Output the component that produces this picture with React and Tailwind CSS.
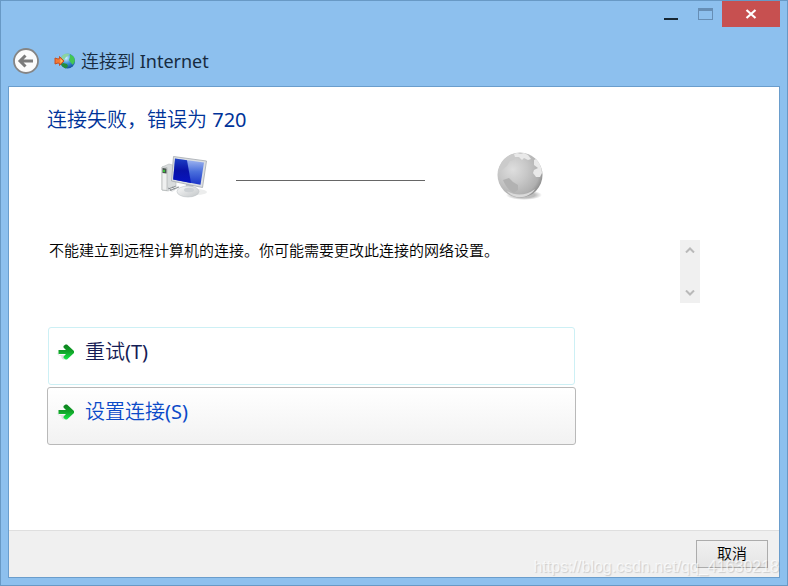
function BackIcon() {
    return (
        <svg viewBox="0 0 26 26" className="size-[26px]" aria-hidden="true">
            <circle cx="13" cy="13" r="12" fill="#fbfbfb" stroke="#858585" strokeWidth="1.8" />
            <path d="M20 13H8M12.5 7.5L7 13l5.5 5.5" fill="none" stroke="#7b7b7b" strokeWidth="3" />
        </svg>
    );
}

function InternetIcon() {
    return (
        <svg viewBox="0 0 22 18" className="h-[18px] w-[22px]" aria-hidden="true">
            <defs>
                <radialGradient id="net" cx="0.4" cy="0.3" r="0.75">
                    <stop offset="0" stopColor="#d4f3ff" />
                    <stop offset="0.5" stopColor="#3f94d8" />
                    <stop offset="1" stopColor="#104a98" />
                </radialGradient>
            </defs>
            <circle cx="13.5" cy="9" r="7.5" fill="url(#net)" />
            <path d="M8 4c2-3 6-3 8-2l-2 2-2 1-2 3-3 1c0-2 0-3 1-5z" fill="#8bd4a0" />
            <path d="M16 2l4 3 1 4-2 4-2-2-2-3 1-3z" fill="#43c653" />
            <path d="M9 11l4 1 1 2-2 2.5c-2-.5-4-2-5-4z" fill="#258e3b" />
            <path d="M1 6l3 1 1.500-.5V4.500L10 9l-4.500 4.500v-2L4 11l-3 1z" fill="#f47a35" stroke="#c4481b" strokeWidth="0.9" />
            <path d="M6.500 6.800L8.800 9l-2.300 2.200z" fill="#ffc65c" />
        </svg>
    );
}

function ComputerIcon() {
    return (
        <svg viewBox="0 0 50 46" className="h-[46px] w-[50px]" aria-hidden="true">
            <defs>
                <linearGradient id="screen" x1="0" y1="0" x2="0" y2="1">
                    <stop offset="0" stopColor="#a9bdf2" />
                    <stop offset="0.5" stopColor="#4a6fdc" />
                    <stop offset="1" stopColor="#1a34c8" />
                </linearGradient>
                <linearGradient id="screenDark" x1="0" y1="0" x2="0" y2="1">
                    <stop offset="0" stopColor="#1d3fc4" />
                    <stop offset="0.5" stopColor="#0812a8" />
                    <stop offset="1" stopColor="#0714c0" />
                </linearGradient>
                <linearGradient id="metal" x1="0" y1="0" x2="1" y2="1">
                    <stop offset="0" stopColor="#fafafa" />
                    <stop offset="1" stopColor="#c3c7c9" />
                </linearGradient>
            </defs>
            <ellipse cx="38" cy="39" rx="10" ry="3" fill="#eceded" />
            <path d="M3 14l7-3 7 2v22l-8 3-6-1z" fill="#d9dcdd" stroke="#b9bdbe" strokeWidth="0.6" />
            <path d="M3 14l5 .5v23L3 37z" fill="#eff0f0" stroke="#a5a9a9" strokeWidth="0.6" />
            <path d="M3.5 15l4 .5v5l-4-.5z" fill="#46504b" />
            <circle cx="5" cy="18" r="1.2" fill="#3cc23a" />
            <path d="M8 36l9-3.500 4 1.500-8 5z" fill="#e5e7e8" />
            <path d="M9 36l8-3M11 37.500l9-3.500M9.500 35l3 2M13 34l3 2" stroke="#7d8387" strokeWidth="0.8" />
            <path d="M27 31l7 1 1 7h-9z" fill="#bfc5ca" />
            <ellipse cx="29" cy="38.500" rx="11" ry="5.500" fill="url(#metal)" stroke="#c0c4c7" strokeWidth="0.6" />
            <ellipse cx="30" cy="37" rx="5" ry="2.200" fill="#cdd1d4" />
            <path d="M14.500 3.500L47.500 8l-4 26.500L12.500 28z" fill="#dcdfe2" stroke="#a4aab0" strokeWidth="0.8" />
            <path d="M16 5.500l29 4-3.500 22.300L14.200 26.500z" fill="url(#screen)" />
            <path d="M16 5.500l12 1.700 4 22.700-17.800-3.400z" fill="url(#screenDark)" />
        </svg>
    );
}

function GlobeIcon() {
    return (
        <svg viewBox="0 0 48 50" className="h-[50px] w-[48px]" aria-hidden="true">
            <defs>
                <radialGradient id="globe" cx="0.34" cy="0.38" r="0.7">
                    <stop offset="0" stopColor="#dedede" />
                    <stop offset="0.45" stopColor="#c8c8c8" />
                    <stop offset="0.85" stopColor="#b0b0b0" />
                    <stop offset="1" stopColor="#8d8d8d" />
                </radialGradient>
                <radialGradient id="globeShadow">
                    <stop offset="0.6" stopColor="#bdbdbd" />
                    <stop offset="1" stopColor="#fff" />
                </radialGradient>
            </defs>
            <ellipse cx="28" cy="44" rx="18" ry="5" fill="url(#globeShadow)" />
            <circle cx="24" cy="24" r="22.5" fill="url(#globe)" />
            <path d="M7 10c5-6 11-8 17-8l4 3-3 3-4-2-3 3-4 1-3 5-5 4-4 3c0-4 2-8 5-12z" fill="#cbcbcb" />
            <path d="M18 3l3-1 3 1 4-1 4 2 3 4-3 1-4-2-2 2-3-3-4 0zM38 9l2-1c4 4 6 9 6 14l-2 4-4 0-3-4 1-3 4-2-4-3z" fill="#e9e9e9" />
            <path d="M7 29l6-2 4 4 5 3 0 5-4 3c-6-3-9-8-11-13z" fill="#b2b2b2" />
            <path d="M11 40c8 5 19 5 28-2-5 9-21 12-28 2z" fill="#dadada" />
        </svg>
    );
}

function ArrowIcon() {
    return (
        <svg viewBox="0 0 18 16" className="h-4 w-[18px] shrink-0" aria-hidden="true">
            <defs>
                <linearGradient id="arrow" x1="0" y1="0" x2="0" y2="1">
                    <stop offset="0" stopColor="#0a7f1c" />
                    <stop offset="0.5" stopColor="#12a52a" />
                    <stop offset="1" stopColor="#18e848" />
                </linearGradient>
            </defs>
            <path d="M0 8l2 3h6l-2 2 2 3-3-1-1-3-3-1z" fill="#e2dfe4" />
            <path d="M1.500 6H9L6.500 3.500V2L8.500.500H10L17 7v2l-7 6.500H8.500L6.500 14v-1.500L9 10H1.500z" fill="url(#arrow)" />
        </svg>
    );
}

function Chevron({ down }) {
    return (
        <svg viewBox="0 0 10 6" className={`h-1.5 w-2.5 ${down ? "rotate-180" : ""}`} aria-hidden="true">
            <path d="M1 5.5l4-4 4 4" fill="none" stroke="#b9b9b9" strokeWidth="2" />
        </svg>
    );
}

export default function App() {
    return (
        <div className="relative flex min-h-screen flex-col border border-[#6899c5] bg-[#8dc0ee] px-[7px] pb-[7px] font-['Noto_Sans','Noto_Sans_CJK_SC_DemiLight','Noto_Sans_CJK_SC',sans-serif]">
            <header>
                <div className="flex h-[26px] items-stretch justify-end">
                    <button aria-label="最小化" className="flex w-[34px] items-end justify-center pb-[7px]">
                        <span className="h-0.5 w-3.5 bg-[#172733]"></span>
                    </button>
                    <button aria-label="最大化" disabled className="flex w-[34px] items-center justify-center">
                        <span className="h-3 w-[15px] border border-t-[3px] border-[#668eb5]"></span>
                    </button>
                    <button aria-label="关闭" className="flex w-[58px] items-center justify-center bg-[#c75050]">
                        <svg viewBox="0 0 12 10" className="h-2.5 w-3" aria-hidden="true">
                            <path d="M1.5 1l9 8M10.5 1l-9 8" stroke="#fff" strokeWidth="2.2" />
                        </svg>
                    </button>
                </div>
                <div className="flex h-[59px] items-center pt-2.5 pb-px pl-[5px]">
                    <button aria-label="返回"><BackIcon /></button>
                    <div className="ml-[15px] flex items-center gap-[5px]">
                        <InternetIcon />
                        <h1 className="text-lg text-[#172b3f]">连接到 Internet</h1>
                    </div>
                </div>
            </header>

            <main className="flex flex-1 flex-col border border-[#6a9dcc] bg-white">
                <div className="flex-1 pt-[18px] pr-[79px] pl-[38px]">
                    <h2 className="text-xl leading-[30px] text-[#003399]">连接失败，错误为 720</h2>

                    <div className="mt-4 flex items-center pl-[112px]">
                        <ComputerIcon />
                        <div className="mx-[27px] mt-2 h-px w-[189px] bg-[#666]"></div>
                        <div className="ml-11"><GlobeIcon /></div>
                    </div>

                    <div className="mt-[39px] flex h-[63px] justify-between">
                        <p className="pl-0.5 text-[15px] leading-5 text-black">不能建立到远程计算机的连接。你可能需要更改此连接的网络设置。</p>
                        <div className="flex w-5 shrink-0 flex-col justify-between bg-[#f0f0f0]">
                            <button aria-label="向上滚动" disabled className="flex h-5 items-center justify-center"><Chevron /></button>
                            <button aria-label="向下滚动" disabled className="flex h-5 items-center justify-center"><Chevron down /></button>
                        </div>
                    </div>

                    <div className="mt-6 flex w-[81%] flex-col gap-0.5">
                        <button className="mx-px flex h-[58px] items-start gap-2.5 rounded-[3px] border border-[#cdf0f5] bg-white pt-2.5 pl-2 text-left text-xl leading-7 text-[#151c55]">
                            <span className="flex h-7 items-center"><ArrowIcon /></span>
                            重试(T)
                        </button>
                        <button className="flex h-[58px] items-start gap-2.5 rounded-[3px] border border-[#b9b9b9] bg-linear-to-b from-white to-[#f2f2f2] pt-2.5 pl-[9px] text-left text-xl leading-7 text-[#0b4ac8]">
                            <span className="flex h-7 items-center"><ArrowIcon /></span>
                            设置连接(S)
                        </button>
                    </div>
                </div>

                <footer className="flex h-[47px] items-start justify-end border-t border-[#dfdfdf] bg-[#f0f0f0] pt-[9px] pr-[11px]">
                    <button className="h-7 w-[72px] border border-[#acacac] bg-linear-to-b from-[#f0f0f0] to-[#e5e5e5] pb-0.5 text-[15px] leading-6 text-black">取消</button>
                </footer>
            </main>

            <span className="pointer-events-none absolute right-2 bottom-2 font-['Liberation_Sans',sans-serif] text-base leading-5 text-white/70 [text-shadow:1px_1px_1px_rgb(0_0_0/0.15)]">https://blog.csdn.net/qq_41630218</span>
        </div>
    );
}
